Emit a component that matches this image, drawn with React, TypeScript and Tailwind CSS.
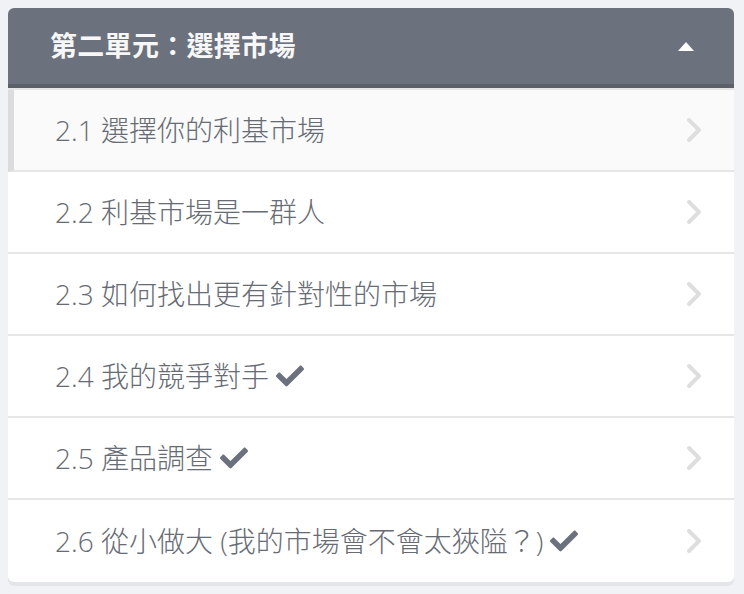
import { FaCheck } from 'react-icons/fa';

interface ILesson {
    title: string;
    done: boolean;
}

const lessons: ILesson[] = [
    { title: '2.1 選擇你的利基市場', done: false },
    { title: '2.2 利基市場是一群人', done: false },
    { title: '2.3 如何找出更有針對性的市場', done: false },
    { title: '2.4 我的競爭對手', done: true },
    { title: '2.5 產品調查', done: true },
    { title: '2.6 從小做大 (我的市場會不會太狹隘？)', done: true },
];

function Chevron() {
    return (
        <svg width="16" height="26" viewBox="0 0 16 26" fill="none">
            <polyline
                points="3,3 13,13 3,23"
                stroke="#dedede"
                strokeWidth="4"
                strokeLinecap="round"
                strokeLinejoin="round"
            />
        </svg>
    );
}

export default function App() {
    return (
        <div
            className="min-h-[594px] w-full bg-[#f1f2f6] p-2"
            style={{ fontFamily: '"Open Sans", "Noto Sans CJK TC", sans-serif' }}
        >
            <div className="w-[726px] overflow-hidden rounded-[6px] bg-white shadow-[0_4px_0_#e4e5e8]">
                <div className="flex h-[80px] flex-row items-center justify-between border-b-4 border-[#5b6069] bg-[#6c727d] pl-[42px] pr-[40px]">
                    <h2 className="text-[27px] font-bold tracking-[0.3px] text-[#f7f7f7]">
                        第二單元：選擇市場
                    </h2>
                    <div className="h-0 w-0 border-x-[8px] border-b-[9px] border-x-transparent border-b-white" />
                </div>
                <div className="border-t-2 border-[#e6e6e6]">
                    {lessons.map((lesson: ILesson, index: number) => (
                        <div
                            className={`flex h-[82px] flex-row items-center justify-between pr-[32px] ${index === 0 ? 'border-l-[6px] border-[#dcdcdc] bg-[#fafafa] pl-[41px]' : 'pl-[47px]'} ${index < lessons.length - 1 ? 'border-b-2 border-b-[#e6e6e6]' : 'h-[80px]'}`}
                            key={index}
                        >
                            <div className="flex flex-row items-center gap-[7px] text-[28px] font-light text-[#666b74]">
                                <span>{lesson.title}</span>
                                {lesson.done && (
                                    <FaCheck className="text-[#6c727d]" size={28} />
                                )}
                            </div>
                            <Chevron />
                        </div>
                    ))}
                </div>
            </div>
        </div>
    );
}
